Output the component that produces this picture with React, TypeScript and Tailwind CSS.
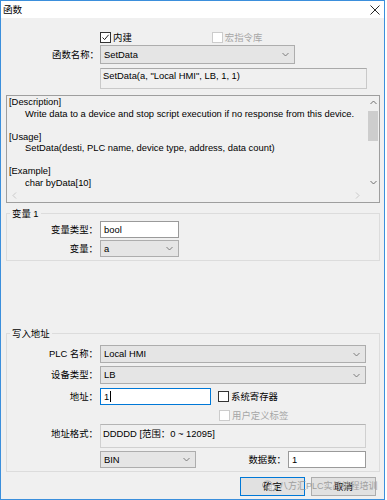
import React from 'react'

const Chevron = () => (
  <svg width="7" height="5" viewBox="0 0 7 5" className="shrink-0">
    <path d="M0.5 1 L3.5 4 L6.5 1" fill="none" stroke="#707070" strokeWidth="0.9" />
  </svg>
)

const Select = ({ text, className }: { text: string; className: string }) => (
  <div
    className={`flex items-center justify-between border border-[#adadad] bg-[#e5e5e5] pl-[3px] pr-[5px] ${className}`}
  >
    <span>{text}</span>
    <Chevron />
  </div>
)

const CheckBox = ({
  label,
  checked,
  disabled,
}: {
  label: string
  checked?: boolean
  disabled?: boolean
}) => (
  <div className="flex items-center">
    <div
      className={`flex h-[11px] w-[11px] items-center justify-center border bg-white ${
        disabled ? 'border-[#cccccc]' : 'border-[#333333]'
      }`}
    >
      {checked && (
        <svg width="9" height="9" viewBox="0 0 9 9">
          <path d="M1.5 4.5 L3.6 6.6 L7.6 1.8" fill="none" stroke="#222" strokeWidth="1" />
        </svg>
      )}
    </div>
    <span className={`ml-[2px] ${disabled ? 'text-[#a6a6a6]' : ''}`}>{label}</span>
  </div>
)

const GroupRow = ({ label, children, className = '' }: { label: string; children: React.ReactNode; className?: string }) => (
  <div className={`flex items-center ${className}`}>
    <div className="w-[91px] shrink-0 text-right">{label}</div>
    <div className="ml-[2px] flex flex-1 items-center">{children}</div>
  </div>
)

const description = [
  { t: '[Description]', indent: false },
  { t: 'Write data to a device and stop script execution if no response from this device.', indent: true },
  { t: '', indent: false },
  { t: '[Usage]', indent: false },
  { t: 'SetData(desti, PLC name, device type, address, data count)', indent: true },
  { t: '', indent: false },
  { t: '[Example]', indent: false },
  { t: 'char byData[10]', indent: true },
]

export default function App() {
  return (
    <div className="h-[500px] w-[387px] bg-white font-['Liberation_Sans','Noto_Sans_CJK_SC',sans-serif] text-[9.4px] leading-none text-black">
      <div className="relative flex h-[500px] w-[385px] flex-col border border-[#3b8fdc]">
        {/* title bar */}
        <div className="flex h-[17px] items-center justify-between bg-white pl-[2px] pr-[4px]">
          <span className="text-[9.6px]">函数</span>
          <svg width="10" height="10" viewBox="0 0 10 10">
            <path d="M0.5 0.5L9.5 9.5M9.5 0.5L0.5 9.5" stroke="#111" strokeWidth="0.9" />
          </svg>
        </div>

        <div className="flex flex-1 flex-col bg-[#f0f0f0]">
          {/* built-in / macro library */}
          <div className="mt-[13px] flex h-[13px] items-center pl-[99px]">
            <CheckBox label="内建" checked />
            <div className="ml-[80px]">
              <CheckBox label="宏指令库" disabled />
            </div>
          </div>

          {/* function name */}
          <div className="mt-[1px] flex items-center">
            <div className="w-[98px] text-right">函数名称：</div>
            <Select text="SetData" className="ml-[1px] h-[19px] w-[195px]" />
          </div>

          <div className="ml-[99px] mt-[4px] h-[21px] w-[267px] border border-[#c9c9c9] border-t-[#a9a9a9] pl-[2px] pt-[2px]">
            SetData(a, "Local HMI", LB, 1, 1)
          </div>

          {/* description */}
          <div className="ml-[5px] mt-[6px] flex h-[108px] w-[374px] flex-col border border-[#9e9e9e]">
            <div className="flex h-[93px]">
              <div className="flex-1 overflow-hidden pl-[2px] leading-[11.5px]">
                {description.map((l, i) => (
                  <div key={i} className={`h-[11.5px] whitespace-nowrap ${l.indent ? 'pl-[16px]' : ''}`}>
                    {l.t}
                  </div>
                ))}
              </div>
              <div className="flex w-[12px] flex-col items-center">
                <svg width="7" height="5" viewBox="0 0 7 5" className="mt-[4px]">
                  <path d="M0.5 4 L3.5 1 L6.5 4" fill="none" stroke="#606060" strokeWidth="0.9" />
                </svg>
                <div className="mt-[6px] h-[30px] w-[10px] bg-[#cdcdcd]" />
                <div className="flex-1" />
                <svg width="7" height="5" viewBox="0 0 7 5" className="mb-[4px]">
                  <path d="M0.5 1 L3.5 4 L6.5 1" fill="none" stroke="#606060" strokeWidth="0.9" />
                </svg>
              </div>
            </div>
            <div className="flex h-[13px] items-center justify-between pl-[5px] pr-[19px]">
              <svg width="5" height="7" viewBox="0 0 5 7">
                <path d="M4 0.5 L1 3.5 L4 6.5" fill="none" stroke="#c4c4c4" strokeWidth="0.9" />
              </svg>
              <svg width="5" height="7" viewBox="0 0 5 7">
                <path d="M1 0.5 L4 3.5 L1 6.5" fill="none" stroke="#c4c4c4" strokeWidth="0.9" />
              </svg>
            </div>
          </div>

          {/* variable 1 */}
          <fieldset className="ml-[5px] mt-[4px] w-[374px] border border-[#dcdcdc] pb-[3px] pr-[13px]">
            <legend className="ml-[3px] px-[2px] leading-[13px]">变量 1</legend>
            <GroupRow label="变量类型：" className="mt-[1px]">
              <div className="flex h-[17px] w-[79px] items-center border border-[#9a9a9a] bg-white pl-[3px]">bool</div>
            </GroupRow>
            <GroupRow label="变量：" className="mt-[2px]">
              <Select text="a" className="h-[17px] w-[79px]" />
            </GroupRow>
          </fieldset>

          {/* write address */}
          <fieldset className="ml-[5px] mt-[66px] w-[374px] border border-[#dcdcdc] pb-[3px] pr-[13px]">
            <legend className="ml-[3px] px-[2px] leading-[13px]">写入地址</legend>
            <GroupRow label="PLC 名称：" className="mt-[5px]">
              <Select text="Local HMI" className="h-[18px] w-full" />
            </GroupRow>
            <GroupRow label="设备类型：" className="mt-[3px]">
              <Select text="LB" className="h-[18px] w-full" />
            </GroupRow>
            <GroupRow label="地址：" className="mt-[4px]">
              <div className="flex h-[17px] w-[111px] items-center border border-[#0078d7] bg-white pl-[3px]">
                1<span className="ml-[1px] h-[11px] w-px bg-black" />
              </div>
              <div className="ml-[7px]">
                <CheckBox label="系统寄存器" />
              </div>
            </GroupRow>
            <div className="ml-[212px] mt-[5px] flex h-[11px] items-center">
              <CheckBox label="用户定义标签" disabled />
            </div>
            <div className="mt-[3px] flex items-start">
              <div className="w-[91px] shrink-0 pt-[5px] text-right">地址格式：</div>
              <div className="ml-[2px] h-[24px] flex-1 border border-[#d0d0d0] border-t-[#b4b4b4] pl-[2px] pt-[4px]">
                DDDDD [范围：0 ~ 12095]
              </div>
            </div>
            <div className="mt-[3px] flex items-center pl-[93px]">
              <Select text="BIN" className="h-[17px] w-[96px]" />
              <div className="flex-1 text-right">数据数：</div>
              <div className="ml-[2px] flex h-[17px] w-[78px] items-center border border-[#9a9a9a] bg-white pl-[3px]">1</div>
            </div>
          </fieldset>

          {/* buttons */}
          <div className="mt-[5px] flex justify-end gap-[6px] pr-[8px]">
            <div className="flex h-[19px] w-[65px] items-center justify-center border border-[#0078d7] bg-[#e1e1e1]">确定</div>
            <div className="flex h-[19px] w-[65px] items-center justify-center border border-[#adadad] bg-[#e1e1e1]">取消</div>
          </div>
        </div>

        {/* watermark */}
        <div className="pointer-events-none absolute left-[261px] top-[479px] flex items-center text-[9px] text-[#8f8f8f] opacity-80">
          <svg width="14" height="12" viewBox="0 0 14 12">
            <ellipse cx="5.5" cy="5" rx="5" ry="4" fill="none" stroke="#9a9a9a" strokeWidth="0.9" />
            <ellipse cx="9.5" cy="7.5" rx="4" ry="3.2" fill="#f0f0f0" stroke="#9a9a9a" strokeWidth="0.9" />
          </svg>
          <span className="ml-[3px]">八方汇PLC实战编程培训</span>
        </div>
      </div>
    </div>
  )
}
